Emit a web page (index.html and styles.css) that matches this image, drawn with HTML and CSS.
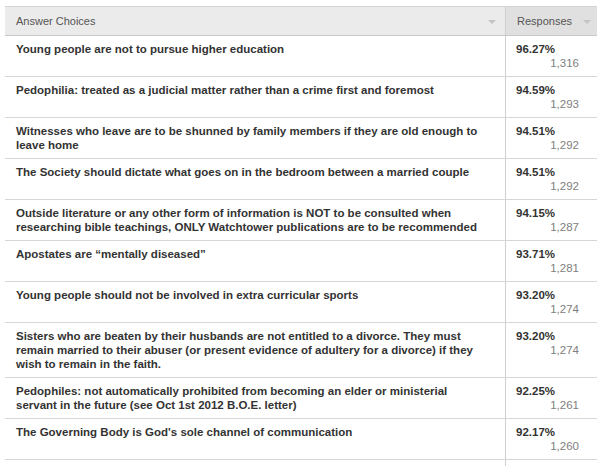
FILE: index.html
```html
<!DOCTYPE html>
<html>
<head>
<meta charset="utf-8">
<link rel="stylesheet" href="styles.css">
</head>
<body>
<div class="table">
  <div class="head">
    <div class="hcell hq"><span>Answer Choices</span><span class="arrow"></span></div>
    <div class="hcell hr"><span>Responses</span><span class="arrow"></span></div>
  </div>
  <div class="row"><div class="q">Young people are not to pursue higher education</div><div class="r"><div class="pct">96.27%</div><div class="cnt">1,316</div></div></div>
  <div class="row"><div class="q">Pedophilia: treated as a judicial matter rather than a crime first and foremost</div><div class="r"><div class="pct">94.59%</div><div class="cnt">1,293</div></div></div>
  <div class="row"><div class="q">Witnesses who leave are to be shunned by family members if they are old enough to leave home</div><div class="r"><div class="pct">94.51%</div><div class="cnt">1,292</div></div></div>
  <div class="row"><div class="q">The Society should dictate what goes on in the bedroom between a married couple</div><div class="r"><div class="pct">94.51%</div><div class="cnt">1,292</div></div></div>
  <div class="row"><div class="q">Outside literature or any other form of information is NOT to be consulted when researching bible teachings, ONLY Watchtower publications are to be recommended</div><div class="r"><div class="pct">94.15%</div><div class="cnt">1,287</div></div></div>
  <div class="row"><div class="q">Apostates are “mentally diseased”</div><div class="r"><div class="pct">93.71%</div><div class="cnt">1,281</div></div></div>
  <div class="row"><div class="q">Young people should not be involved in extra curricular sports</div><div class="r"><div class="pct">93.20%</div><div class="cnt">1,274</div></div></div>
  <div class="row"><div class="q">Sisters who are beaten by their husbands are not entitled to a divorce. They must remain married to their abuser (or present evidence of adultery for a divorce) if they wish to remain in the faith.</div><div class="r"><div class="pct">93.20%</div><div class="cnt">1,274</div></div></div>
  <div class="row"><div class="q">Pedophiles: not automatically prohibited from becoming an elder or ministerial servant in the future (see Oct 1st 2012 B.O.E. letter)</div><div class="r"><div class="pct">92.25%</div><div class="cnt">1,261</div></div></div>
  <div class="row"><div class="q">The Governing Body is God's sole channel of communication</div><div class="r"><div class="pct">92.17%</div><div class="cnt">1,260</div></div></div>
  <div class="row"><div class="q">&nbsp;</div><div class="r"><div class="pct">&nbsp;</div><div class="cnt">&nbsp;</div></div></div>
</div>
</body>
</html>
```
FILE: styles.css
```css
html, body {
  margin: 0;
  padding: 0;
  background: #fff;
  overflow: hidden;
}
body {
  font-family: "Liberation Sans", Arial, sans-serif;
  padding: 6px 0 0 5px;
}
.table {
  width: 592px;
  border-top: 1px solid #d4d4d4;
}
.head {
  display: grid;
  grid-template-columns: 500px 1fr;
  height: 28px;
  border-bottom: 1px solid #c8c8c8;
}
.hcell {
  display: flex;
  align-items: center;
  justify-content: space-between;
  font-size: 11px;
  color: #555;
}
.hq {
  background: #ebebeb;
  padding: 0 9px 0 11px;
}
.hr {
  background: #e0e0e0;
  border-left: 1px solid #d0d0d0;
  padding: 0 6px 0 11px;
}
.arrow {
  width: 0;
  height: 0;
  border-left: 4px solid transparent;
  border-right: 4px solid transparent;
  border-top: 4px solid #c4c4c4;
  margin-top: 2px;
}
.row {
  display: grid;
  grid-template-columns: 500px 1fr;
  border-bottom: 1px solid #d6d6d6;
}
.q {
  padding: 6px 22px 6px 11px;
  font-size: 11.5px;
  line-height: 14px;
  font-weight: bold;
  color: #333;
}
.r {
  border-left: 1px solid #cfcfcf;
  padding: 6px 18px 6px 10px;
  font-size: 11.5px;
  line-height: 14px;
}
.pct {
  font-weight: bold;
  color: #333;
}
.cnt {
  text-align: right;
  color: #808080;
}
```
